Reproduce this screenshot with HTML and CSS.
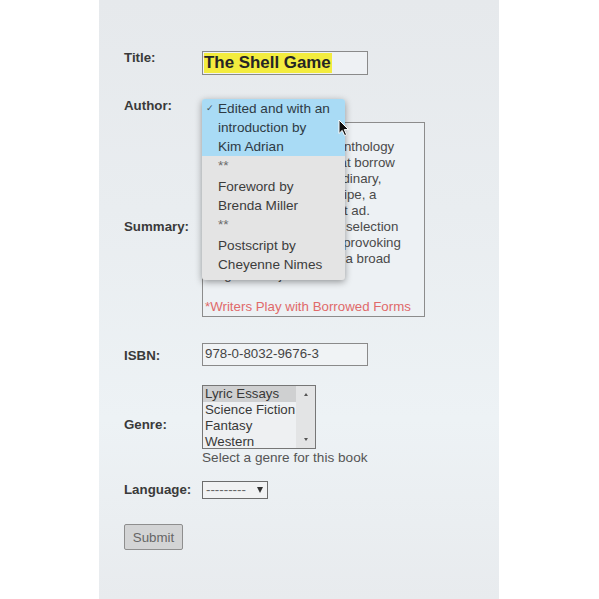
FILE: index.html
```html
<!DOCTYPE html>
<html lang="en">
<head>
<meta charset="utf-8">
<title>Book form</title>
<link rel="stylesheet" href="styles.css">
</head>
<body>
<div class="panel">
  <form class="form">
    <div class="row row-title">
      <label class="lbl">Title:</label>
      <div class="field title-field"><span class="hl">The Shell Game</span></div>
    </div>

    <div class="row row-author">
      <label class="lbl">Author:</label>
      <div class="ctrl-wrap">
        <div class="author-select"></div>
        <div class="popup">
          <div class="opt opt-sel"><span class="check">✓</span>Edited and with an<br>introduction by<br>Kim Adrian</div>
          <div class="opt opt-star">**</div>
          <div class="opt opt-gap">Foreword by<br>Brenda Miller</div>
          <div class="opt opt-star">**</div>
          <div class="opt opt-gap">Postscript by<br>Cheyenne Nimes</div>
        </div>
      </div>
    </div>

    <div class="row row-summary">
      <label class="lbl">Summary:</label>
      <div class="textarea">
        <div class="tl">The Shell Game is an anthology</div>
        <div class="tl">of hermit crab works that borrow</div>
        <div class="tl">the forms of the extraordinary,</div>
        <div class="tl">kinds of writing as a recipe, a</div>
        <div class="tl">a police report or a want ad.</div>
        <div class="tl">The book offers a great selection</div>
        <div class="tl">of imaginative, thought-provoking</div>
        <div class="tl">short essays that cover a broad</div>
        <div class="tl">range of subjects.</div>
        <div class="tl">&nbsp;</div>
        <div class="tl tl-red">*Writers Play with Borrowed Forms</div>
      </div>
    </div>

    <div class="row row-isbn">
      <label class="lbl">ISBN:</label>
      <div class="field isbn-field">978-0-8032-9676-3</div>
    </div>

    <div class="row row-genre">
      <label class="lbl">Genre:</label>
      <div class="genre-col">
        <div class="listbox">
          <div class="lb-items">
            <div class="lb-item lb-sel">Lyric Essays</div>
            <div class="lb-item">Science Fiction</div>
            <div class="lb-item">Fantasy</div>
            <div class="lb-item">Western</div>
          </div>
          <div class="lb-scroll"><span class="arr-up"></span><span class="arr-down"></span></div>
        </div>
        <div class="help">Select a genre for this book</div>
      </div>
    </div>

    <div class="row row-lang">
      <label class="lbl">Language:</label>
      <div class="lang-select"><span class="dashes">---------</span><span class="caret"></span></div>
    </div>

    <div class="row row-submit">
      <button type="button" class="submit">Submit</button>
    </div>
  </form>

  <svg class="cursor" width="12" height="18" viewBox="0 0 12 18">
    <path d="M1 1 L1 14.5 L4.2 11.4 L6.6 16.6 L8.6 15.7 L6.3 10.6 L10.6 10.6 Z" fill="#111" stroke="#fff" stroke-width="1" stroke-linejoin="round"/>
  </svg>
</div>
</body>
</html>
```

FILE: styles.css
```css
html, body {
  margin: 0;
  padding: 0;
  background: #ffffff;
}

body {
  font-family: "Liberation Sans", Arial, sans-serif;
  font-size: 13.3px;
  color: #333;
}

.panel {
  position: relative;
  width: 400px;
  height: 599px;
  margin-left: 99px;
  box-sizing: border-box;
  padding: 50px 0 0 25px;
  background: linear-gradient(to bottom, #e6e9ec 0%, #e9edf0 35%, #edf2f5 70%, #e8ebee 100%);
}

.form {
  display: flex;
  flex-direction: column;
}

.row {
  display: flex;
  align-items: flex-start;
}

.lbl {
  width: 78px;
  flex: none;
  font-weight: bold;
  font-size: 13.3px;
  line-height: 16px;
  color: #3a3a3a;
}

/* Title */
.field {
  box-sizing: border-box;
  width: 166px;
  border: 1px solid #8a8a8a;
  background: #eef1f4;
}

.title-field {
  height: 24px;
  margin-top: 1px;
  padding: 1px 0 0 1px;
}

.hl {
  display: inline-block;
  background: #f3ec3e;
  font-weight: bold;
  font-size: 16.9px;
  line-height: 20px;
  color: #252525;
  padding-right: 1px;
}

/* Author */
.row-author {
  margin-top: 23px;
}

.ctrl-wrap {
  position: relative;
}

.author-select {
  width: 143px;
  height: 20px;
  margin-top: 1px;
}

.popup {
  position: absolute;
  left: 0;
  top: 1px;
  width: 143px;
  height: 181px;
  box-sizing: border-box;
  background: #e4e4e4;
  border-radius: 3px;
  box-shadow: 0 2px 7px rgba(0, 0, 0, 0.38);
  font-family: "Liberation Sans", Arial, sans-serif;
  font-size: 13.6px;
  line-height: 19px;
  color: #3c3c3c;
  overflow: hidden;
  z-index: 2;
}

.opt {
  position: relative;
  padding-left: 16px;
}

.opt-sel {
  background: #a9dbf5;
  color: #2e3a44;
}

.check {
  position: absolute;
  left: 4px;
  top: 0;
  font-size: 9px;
  color: #3a4a58;
}

.opt-star {
  color: #6a6a6a;
}

.opt-gap {
  padding-top: 2px;
}

/* Summary */
.row-summary {
  margin-top: 3px;
}

.row-summary .lbl {
  margin-top: 97px;
}

.textarea {
  box-sizing: border-box;
  width: 223px;
  height: 195px;
  border: 1px solid #8c8c8c;
  background: #edf1f4;
  padding: 16px 2px 2px 2px;
  font-size: 13.3px;
  line-height: 16px;
  color: #4a4a4a;
  overflow: hidden;
}

.tl {
  white-space: nowrap;
}

.tl-red {
  color: #e06a6a;
}

/* ISBN */
.row-isbn {
  margin-top: 26px;
}

.row-isbn .lbl {
  margin-top: 5px;
}

.isbn-field {
  height: 23px;
  padding: 2px 0 0 2px;
  line-height: 16px;
  color: #454545;
  background: #f0f3f5;
}

/* Genre */
.row-genre {
  margin-top: 19px;
}

.row-genre .lbl {
  margin-top: 32px;
}

.genre-col {
  display: flex;
  flex-direction: column;
}

.listbox {
  box-sizing: border-box;
  width: 114px;
  height: 64px;
  border: 1px solid #767676;
  background: #eef0f2;
  display: flex;
}

.lb-items {
  flex: 1;
  overflow: hidden;
}

.lb-item {
  padding-left: 2px;
  line-height: 16px;
  white-space: nowrap;
  color: #383838;
}

.lb-sel {
  background: #cfd0d1;
}

.lb-scroll {
  position: relative;
  width: 19px;
  flex: none;
  background: #e3e4e5;
}

.arr-up, .arr-down {
  position: absolute;
  left: 8px;
  width: 0;
  height: 0;
  border-left: 2px solid transparent;
  border-right: 2px solid transparent;
}

.arr-up {
  top: 7px;
  border-bottom: 3px solid #555;
}

.arr-down {
  bottom: 7px;
  border-top: 3px solid #555;
}

.help {
  font-size: 13.6px;
  line-height: 18px;
  color: #555;
  white-space: nowrap;
}

/* Language */
.row-lang {
  margin-top: 14px;
}

.row-lang .lbl {
  margin-top: 1px;
}

.lang-select {
  box-sizing: border-box;
  width: 66px;
  height: 18px;
  border: 1px solid #6c6c6c;
  background: #f1f2f3;
  display: flex;
  align-items: center;
  justify-content: space-between;
  padding: 0 4px 0 3px;
}

.dashes {
  font-size: 13.3px;
  letter-spacing: 0;
  color: #666;
  line-height: 14px;
}

.caret {
  width: 0;
  height: 0;
  border-left: 3px solid transparent;
  border-right: 3px solid transparent;
  border-top: 6px solid #333;
}

/* Submit */
.row-submit {
  margin-top: 25px;
}

.submit {
  box-sizing: border-box;
  width: 59px;
  height: 26px;
  margin: 0;
  padding: 0;
  border: 1px solid #8e8e8e;
  border-radius: 2px;
  background: #d3d4d5;
  font-family: "Liberation Sans", Arial, sans-serif;
  font-size: 13.3px;
  color: #666;
}

/* Cursor overlay */
.cursor {
  position: absolute;
  left: 239px;
  top: 119px;
  z-index: 5;
}
```
